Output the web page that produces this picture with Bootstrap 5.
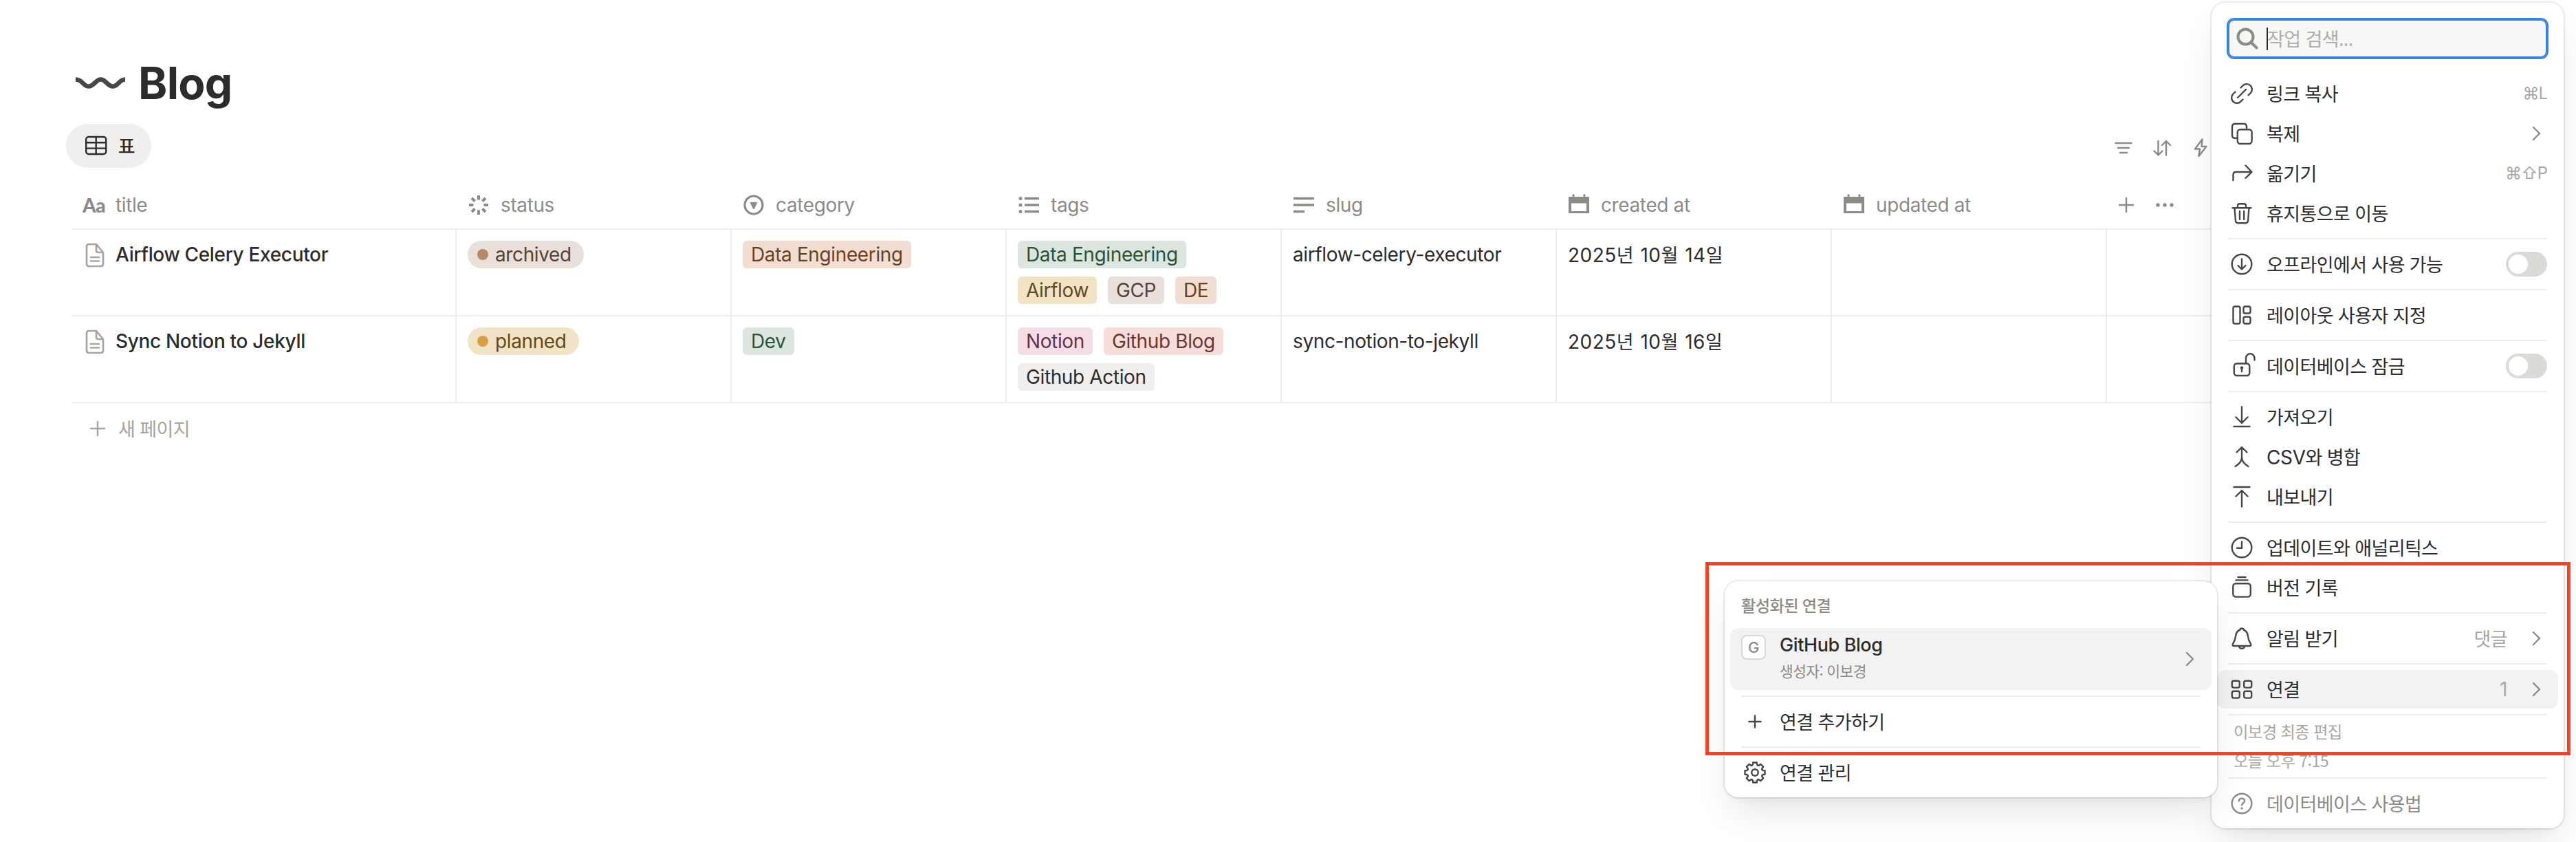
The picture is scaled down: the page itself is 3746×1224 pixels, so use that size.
<!DOCTYPE html>
<html lang="ko">
<head>
<meta charset="utf-8">
<title>Blog</title>
<link href="https://cdn.jsdelivr.net/npm/bootstrap@5.3.0/dist/css/bootstrap.min.css" rel="stylesheet">
<style>
body{background:#fff;color:#2c2c2b;font-family:Inter,"Noto Sans CJK KR",sans-serif;font-size:28px;line-height:40px;letter-spacing:-.38px;width:3746px;height:1224px;overflow:hidden;position:relative}
.ko{font-family:"Noto Sans CJK KR",sans-serif;font-size:27px;letter-spacing:-.6px}
svg{display:block;flex:none;fill:none;stroke:currentColor;stroke-width:2.4;stroke-linecap:round;stroke-linejoin:round}
.solid{fill:currentColor;stroke:none}
.page-main{padding:0 0 0 104px}
.page-title{font-size:64px;line-height:76px;font-weight:700;letter-spacing:-.7px;margin:0}
.head-row{height:97px;margin-top:83px}
.view-tab{margin-left:-8px;width:124px;height:64px;border-radius:32px;background:#f0efed;padding:0 24px 0 26px}
.view-tools{color:#8e8b86;padding:6px 527px 0 0;gap:18px}
.db{width:3540px;table-layout:fixed;border-collapse:separate;border-spacing:0;margin-top:20px}
.db th{height:70px;padding:0 16px;border-bottom:2px solid #eeeeec;color:#8e8b86;font-weight:400;vertical-align:middle}
.db td{height:126px;padding:16px 14px 0 16px;border-bottom:2px solid #eeeeec;border-right:2px solid #eeeeec;vertical-align:top}
.db td:last-child{border-right:0}
.row-name{gap:12px;letter-spacing:-.33px}
.aa{width:48px;font-family:Lato,sans-serif;font-weight:900;letter-spacing:-.5px}
.day{letter-spacing:.5px;word-spacing:2px}
.prop-icon{width:32px;height:32px}
.chip{height:40px;padding:0 12px;border-radius:6px;white-space:nowrap}
.state{height:40px;width:fit-content;padding:0 18px 0 14px;border-radius:20px}
.dot{width:16px;height:16px;border-radius:50%;margin-right:10px}
.chips{gap:12px 16px}
.c-brown{background:#e9e0dc;color:#55433a}.c-yellow{background:#f1e3c6;color:#5f4b22}
.c-orange{background:#f1ddd1;color:#6a4124}.c-green{background:#dce6de;color:#2a533c}
.c-pink{background:#f2dee4;color:#63324b}.c-red{background:#f6ddd9;color:#6d3431}.c-gray{background:#f0efed;color:#2c2c2b}
.new-row{color:#a8a49c;height:74px;padding-left:22px;gap:14px}
.pop{position:absolute;background:#fff;border-radius:20px;box-shadow:0 28px 56px -12px rgba(0,0,0,.12),0 4px 8px -2px rgba(0,0,0,.06),0 0 0 2px rgba(60,56,50,.09)}
.act-menu{left:3216px;top:4px;width:512px;height:1200px;padding:24px 8px 0}
.sub-menu{left:2508px;top:845px;width:716px;height:314px;padding:10px 8px 0}
.search-box{margin:0 16px 24px;height:56px;background:#f7f7f5;box-shadow:0 0 0 2px #3584e0,inset 0 0 0 2px #3584e0;border-radius:9px;padding-left:12px}
.search-box input,.search-box input:focus{background:none;font:inherit;font-size:27px;letter-spacing:-.6px;font-family:"Noto Sans CJK KR",sans-serif;outline:0;box-shadow:none}
.search-box input::placeholder{color:#aeadaa;opacity:1}
.caret{width:2px;height:33px;background:#2c2c2b;margin:0 -1px 0 12px;flex:none}
.act{height:56px;padding:0 16px;border-radius:12px;gap:16px}
.act+.act{margin-top:2px}
.act>svg{color:#484745}
.act .chev,.chev{color:#8e8b86;overflow:visible}
.sep{height:2px;background:#ececeb;margin:8px 16px}
.hot{background:#f2f2f2}
.keys{font-size:24px;letter-spacing:-1px;color:#aaa6a0}
.faint{color:#aaa6a0}
.picked{margin-right:28px}
.toggle-pill{width:60px;height:36px;border-radius:18px;background:#dbdad6;padding:4px}
.toggle-pill i{width:28px;height:28px;border-radius:50%;background:#fff}
.edit-note{height:90px;padding:2px 24px 0;margin:-8px 0;color:#aaa6a0;line-height:42px}
.edit-note .ko{font-size:23.3px}
.sub-head{height:48px;padding:0 16px;color:#8e8b86}
.sub-head .ko{font-size:23.2px}
.conn{height:90px;margin-top:10px;padding:10px 16px 0;border-radius:12px;gap:20px}
.conn-name{font-size:27px;letter-spacing:-.4px}
.conn-by{color:#8e8b86;margin-top:-4px}
.conn-by .ko{font-size:21.5px}
.logo-tile{width:36px;height:36px;border:2px solid #d9d8d6;border-radius:8px;background:#fff;color:#8e8b86;font-size:22px;font-weight:500}
.callout{position:absolute;left:2480px;top:817px;width:1258px;height:281px;border:5px solid #f94021}
</style>
</head>
<body>
<main class="page-main d-flex flex-column">
  <header class="head-row d-flex align-items-start">
    <svg width="76" height="76" viewBox="0 0 76 76" style="stroke-width:6.5;color:#484745;margin:0 17px 0 4px;stroke-linecap:butt"><path d="M2 32.500C12 32.500 13 42.500 21 42.500S31 32.500 38.500 32.500S48 42.500 56 42.500S65 32.500 74 32.500"/></svg>
    <h1 class="page-title">Blog</h1>
  </header>
  <div class="d-flex align-items-center justify-content-between">
    <div class="view-tab d-flex align-items-center justify-content-between">
      <svg width="36" height="36" viewBox="0 0 36 36"><rect x="3.200" y="5" width="29" height="25" rx="3.500"/><path d="M3.200 13.200H32M3.200 21.600H32M17.700 5V30"/></svg>
      <span class="ko fw-medium">표</span>
    </div>
    <div class="view-tools d-flex">
      <svg width="38" height="40" viewBox="0 0 38 40"><path stroke-width="2.700" d="M7.500 13H30.500M11 20H27M14 27H24"/></svg>
      <svg width="38" height="40" viewBox="0 0 38 40"><path d="M13.500 10V30M7.500 24.500L13.500 30.500L19.500 24.500M25 30.500V10M19 16L25 10L31 16"/></svg>
      <svg width="38" height="40" viewBox="0 0 38 40"><path d="M21.500 7.500L11 21.500H18L16.500 32L27.500 18H20.500Z"/></svg>
    </div>
  </div>
  <table class="db">
    <colgroup><col style="width:560px"><col style="width:400px"><col style="width:400px"><col style="width:400px"><col style="width:400px"><col style="width:400px"><col style="width:400px"><col></colgroup>
    <thead><tr>
      <th><div class="d-flex align-items-center"><span class="aa">Aa</span><span>title</span></div></th>
      <th><div class="d-flex align-items-center gap-3"><svg class="prop-icon" viewBox="-16 -16 32 32" style="stroke-width:4;stroke-linecap:butt"><path d="M0-14V-7.500M0 14V7.500M-14 0H-7.500M14 0H7.500M-10-10L-5.500-5.500M10 10L5.500 5.500M-10 10L-5.500 5.500M10-10L5.500-5.500"/></svg><span>status</span></div></th>
      <th><div class="d-flex align-items-center gap-3"><svg class="prop-icon" viewBox="-16 -16 32 32"><circle r="13" stroke-width="3.200"/><path class="solid" d="M-5.500-4H5.500L1 5.500Q0 7-1 5.500Z"/></svg><span>category</span></div></th>
      <th><div class="d-flex align-items-center gap-3"><svg class="prop-icon" viewBox="-16 -16 32 32"><path stroke-width="3.400" stroke-linecap="butt" d="M-6-9.500H15M-6 0H15M-6 9.500H15"/><g class="solid"><circle cx="-12" cy="-9.500" r="2.500"/><circle cx="-12" r="2.500"/><circle cx="-12" cy="9.500" r="2.500"/></g></svg><span>tags</span></div></th>
      <th><div class="d-flex align-items-center gap-3"><svg class="prop-icon" viewBox="-16 -16 32 32"><path stroke-width="3.400" stroke-linecap="butt" d="M-15-9.500H15M-15 0H15M-15 9.500H1"/></svg><span>slug</span></div></th>
      <th><div class="d-flex align-items-center gap-3"><svg class="prop-icon" viewBox="-16 -16 32 32"><path class="solid" fill-rule="evenodd" d="M-15-12H-9.500V-15.500H-6.500V-12H6.500V-15.500H9.500V-12H15V12H-15ZM-11-2.500V9H11V-2.500Z"/></svg><span>created at</span></div></th>
      <th><div class="d-flex align-items-center gap-3"><svg class="prop-icon" viewBox="-16 -16 32 32"><path class="solid" fill-rule="evenodd" d="M-15-12H-9.500V-15.500H-6.500V-12H6.500V-15.500H9.500V-12H15V12H-15ZM-11-2.500V9H11V-2.500Z"/></svg><span>updated at</span></div></th>
      <th><div class="d-flex align-items-center" style="gap:24px;margin-left:-4px"><svg class="prop-icon" viewBox="-16 -16 32 32"><path d="M-10 0H10M0-10V10"/></svg><svg class="prop-icon" viewBox="-16 -16 32 32"><g class="solid"><circle cx="-10" r="2.700"/><circle r="2.700"/><circle cx="10" r="2.700"/></g></svg></div></th>
    </tr></thead>
    <tbody>
      <tr>
        <td><div class="row-name d-flex align-items-center fw-medium"><svg width="36" height="40" viewBox="0 0 36 40" style="color:#aca59d;stroke-width:2.700"><path d="M20 5H9.500Q6 5 6 8.500V33.500Q6 37 9.500 37H26.500Q30 37 30 33.500V17L20 5V14Q20 17 23 17H30M12 24H24M12 29.500H24"/></svg><span>Airflow Celery Executor</span></div></td>
        <td><div class="state d-flex align-items-center c-brown"><i class="dot" style="background:#b58a68"></i><span>archived</span></div></td>
        <td><div class="chips d-flex"><span class="chip c-orange">Data Engineering</span></div></td>
        <td><div class="chips d-flex flex-wrap"><span class="chip c-green">Data Engineering</span><span class="chip c-yellow">Airflow</span><span class="chip c-brown">GCP</span><span class="chip c-orange">DE</span></div></td>
        <td>airflow-celery-executor</td>
        <td><span class="day">2025<span class="ko">년</span> 10<span class="ko">월</span> 14<span class="ko">일</span></span></td>
        <td></td><td></td>
      </tr>
      <tr>
        <td><div class="row-name d-flex align-items-center fw-medium"><svg width="36" height="40" viewBox="0 0 36 40" style="color:#aca59d;stroke-width:2.700"><path d="M20 5H9.500Q6 5 6 8.500V33.500Q6 37 9.500 37H26.500Q30 37 30 33.500V17L20 5V14Q20 17 23 17H30M12 24H24M12 29.500H24"/></svg><span>Sync Notion to Jekyll</span></div></td>
        <td><div class="state d-flex align-items-center c-yellow"><i class="dot" style="background:#d5a144"></i><span>planned</span></div></td>
        <td><div class="chips d-flex"><span class="chip c-green">Dev</span></div></td>
        <td><div class="chips d-flex flex-wrap"><span class="chip c-pink">Notion</span><span class="chip c-red">Github Blog</span><span class="chip c-gray">Github Action</span></div></td>
        <td>sync-notion-to-jekyll</td>
        <td><span class="day">2025<span class="ko">년</span> 10<span class="ko">월</span> 16<span class="ko">일</span></span></td>
        <td></td><td></td>
      </tr>
    </tbody>
  </table>
  <div class="new-row d-flex align-items-center"><svg class="prop-icon" viewBox="-16 -16 32 32"><path d="M-10 0H10M0-10V10"/></svg><span class="ko">새 페이지</span></div>
</main>

<aside class="pop act-menu">
  <div class="search-box d-flex align-items-center"><svg width="32" height="32" viewBox="0 0 32 32" style="color:#8e8b86;stroke-width:4"><circle cx="13.500" cy="13.500" r="11"/><path d="M21.500 21.500L29.500 29.500"/></svg><span class="caret"></span><input class="form-control border-0 p-0" placeholder="작업 검색..."></div>
  <div class="act d-flex align-items-center"><svg width="40" height="40"><path d="M18.500 11.500L22 8A7.800 7.800 0 0 1 33 19L29.500 22.500M21.500 28.500L18 32A7.800 7.800 0 0 1 7 21L10.500 17.500M14 26L26 14"/></svg><span class="ko">링크 복사</span><span class="keys ms-auto">⌘L</span></div>
  <div class="act d-flex align-items-center"><svg width="40" height="40"><rect x="13.800" y="14.200" width="20.800" height="20.800" rx="4"/><path d="M13.800 26.800H10Q6 26.800 6 22.800V10Q6 6 10 6H23Q27 6 27 10V14"/></svg><span class="ko">복제</span><svg class="chev ms-auto" width="14" height="24"><path d="M-6 3L3 12L-6 21"/></svg></div>
  <div class="act d-flex align-items-center"><svg width="40" height="40"><path d="M7.500 30V22Q7.500 18 11.500 18H34M25.500 8.500L34.500 18L25.500 27"/></svg><span class="ko">옮기기</span><span class="keys ms-auto">⌘⇧P</span></div>
  <div class="act d-flex align-items-center"><svg width="40" height="40"><path d="M6.500 12.300H33.500M14 12V9Q14 6.200 17 6.200H23Q26 6.200 26 9V12M9.500 12.500L11 31Q11.300 34.200 14.500 34.200H25.500Q28.700 34.200 29 31L30.500 12.500M17 17V29M23.200 17V29"/></svg><span class="ko">휴지통으로 이동</span></div>
  <div class="sep"></div>
  <div class="act d-flex align-items-center"><svg width="40" height="40"><circle cx="20" cy="20" r="14.300"/><path d="M20 12.500V27.500M14.500 22L20 27.500L25.500 22"/></svg><span class="ko">오프라인에서 사용 가능</span><span class="toggle-pill d-flex ms-auto"><i></i></span></div>
  <div class="sep"></div>
  <div class="act d-flex align-items-center"><svg width="40" height="40"><rect x="7.500" y="7.500" width="10" height="25" rx="2.500"/><rect x="22.500" y="7.500" width="10" height="10" rx="2.500"/><rect x="22.500" y="22.500" width="10" height="10" rx="2.500"/></svg><span class="ko">레이아웃 사용자 지정</span></div>
  <div class="sep"></div>
  <div class="act d-flex align-items-center"><svg width="40" height="40" overflow="visible"><rect x="8.800" y="16.500" width="22.500" height="17.500" rx="4"/><path d="M26 16V8.500A6.200 6.200 0 0 1 38.500 8.500V11.500M20 23V28"/><circle class="solid" cx="20" cy="22.800" r="2.300"/></svg><span class="ko">데이터베이스 잠금</span><span class="toggle-pill d-flex ms-auto"><i></i></span></div>
  <div class="sep"></div>
  <div class="act d-flex align-items-center"><svg width="40" height="40"><path d="M20 5.500V29M11.500 20.500L20 29L28.500 20.500M8.500 34H31.500"/></svg><span class="ko">가져오기</span></div>
  <div class="act d-flex align-items-center"><svg width="40" height="40"><path d="M12.500 13.500L20 6.200L27.500 13.500M20 6.500V22Q19 29 10.500 34M20 22Q21 29 29.500 34"/></svg><span>CSV<span class="ko">와 병합</span></span></div>
  <div class="act d-flex align-items-center"><svg width="40" height="40"><path d="M20 34.500V11M11.500 19.500L20 11L28.500 19.500M8.500 6H31.500"/></svg><span class="ko">내보내기</span></div>
  <div class="sep"></div>
  <div class="act d-flex align-items-center"><svg width="40" height="40"><circle cx="20" cy="20" r="14.300"/><path d="M20 11.500V20.800H13"/></svg><span class="ko">업데이트와 애널리틱스</span></div>
  <div class="act d-flex align-items-center"><svg width="40" height="40"><rect x="7.300" y="14.300" width="25.500" height="19.300" rx="4"/><path d="M11.500 9.400H28.500M14.500 5H25.500"/></svg><span class="ko">버전 기록</span></div>
  <div class="sep"></div>
  <div class="act d-flex align-items-center"><svg width="40" height="40"><path d="M17.500 7.500Q17.500 5.500 20 5.500T22.500 7.500C27 9 28.500 12 29 17C29.500 22.500 31 25 33 28.200Q34 31 32 31H8Q6 31 7 28.200C9 25 10.500 22.500 11 17C11.500 12 13 9 17.500 7.500ZM15.800 31Q16.500 34.800 20 34.800T24.200 31"/></svg><span class="ko">알림 받기</span><span class="ko faint picked ms-auto">댓글</span><svg class="chev" width="14" height="24"><path d="M-6 3L3 12L-6 21"/></svg></div>
  <div class="sep"></div>
  <div class="act hot d-flex align-items-center"><svg width="40" height="40"><rect x="5.800" y="7.800" width="11" height="9.800" rx="2.500"/><rect x="23.200" y="7.800" width="11" height="9.800" rx="2.500"/><rect x="5.800" y="22.800" width="11" height="9.800" rx="2.500"/><rect x="23.200" y="22.800" width="11" height="9.800" rx="2.500"/></svg><span class="ko">연결</span><span class="faint picked ms-auto">1</span><svg class="chev" width="14" height="24"><path d="M-6 3L3 12L-6 21"/></svg></div>
  <div class="sep"></div>
  <div class="edit-note"><div><span class="ko">이보경 최종 편집</span></div><div><span class="ko">오늘 오후 7:15</span></div></div>
  <div class="sep"></div>
  <div class="act d-flex align-items-center" style="color:#8e8b86"><svg width="40" height="40" style="color:#8e8b86"><circle cx="20" cy="20" r="14.300"/><path d="M15.800 16.500Q16 12.700 20 12.700T24.200 16.300C24.200 19 20 19.500 20 22.500"/><circle class="solid" cx="20" cy="27" r="1.700"/></svg><span class="ko">데이터베이스 사용법</span></div>
</aside>

<aside class="pop sub-menu">
  <div class="sub-head d-flex align-items-center"><span class="ko fw-medium">활성화된 연결</span></div>
  <div class="conn hot d-flex">
    <span class="logo-tile d-flex align-items-center justify-content-center">G</span>
    <div class="flex-grow-1" style="margin-top:-5px"><div class="conn-name fw-medium">GitHub Blog</div><div class="conn-by"><span class="ko">생성자: 이보경</span></div></div>
    <svg class="chev" width="14" height="24" style="margin-top:23px"><path d="M-6 3L3 12L-6 21"/></svg>
  </div>
  <div class="sep"></div>
  <div class="act d-flex align-items-center"><svg width="40" height="40"><path d="M11.500 20H28.500M20 11.500V28.500"/></svg><span class="ko">연결 추가하기</span></div>
  <div class="sep"></div>
  <div class="act d-flex align-items-center"><svg width="40" height="40" viewBox="-20 -20 40 40"><defs><path id="tooth" d="M-4.300-10.400Q-3.200-10.900-3-12L-2.700-14.500H2.700L3-12Q3.200-10.900 4.300-10.400"/></defs><circle r="4.800"/><use href="#tooth"/><use href="#tooth" transform="rotate(45)"/><use href="#tooth" transform="rotate(90)"/><use href="#tooth" transform="rotate(135)"/><use href="#tooth" transform="rotate(180)"/><use href="#tooth" transform="rotate(225)"/><use href="#tooth" transform="rotate(270)"/><use href="#tooth" transform="rotate(315)"/></svg><span class="ko">연결 관리</span></div>
</aside>
<div class="callout"></div>
<script src="https://cdn.jsdelivr.net/npm/bootstrap@5.3.0/dist/js/bootstrap.bundle.min.js"></script>
</body>
</html>
